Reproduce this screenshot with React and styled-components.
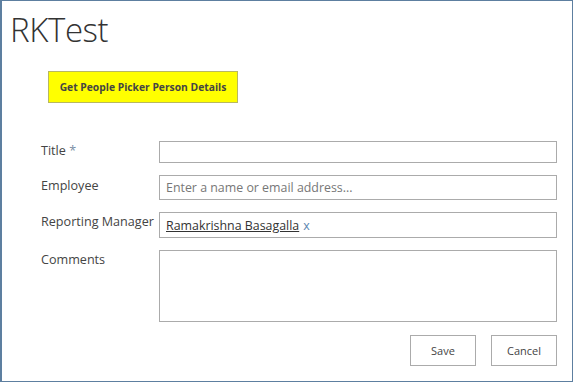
import React from "react";
import styled, { createGlobalStyle } from "styled-components";

const GlobalStyle = createGlobalStyle`
  html, body {
    margin: 0;
    padding: 0;
    background: #fff;
  }
  body {
    font-family: "Open Sans", "Liberation Sans", sans-serif;
    color: #444;
  }
`;

const Frame = styled.div`
  box-sizing: border-box;
  width: 573px;
  height: 382px;
  border: 1px solid #5d7fa0;
  border-left-width: 2px;
  padding: 9px 16px 0 8px;
  overflow: hidden;
`;

const PageTitle = styled.h1`
  margin: 0;
  font-weight: 300;
  font-size: 33px;
  line-height: 39px;
  color: #333;
  letter-spacing: -0.4px;
`;

const ActionBar = styled.div`
  padding: 22px 0 0 38px;
`;

const YellowButton = styled.button`
  box-sizing: border-box;
  width: 190px;
  height: 32px;
  background: #ffff00;
  border: 1px solid #b8b860;
  font-family: "Open Sans", "Liberation Sans", sans-serif;
  font-weight: 700;
  font-size: 10.3px;
  color: #444;
  padding: 0;
  cursor: pointer;
`;

const Form = styled.div`
  display: grid;
  grid-template-columns: 118px 398px;
  row-gap: 12px;
  padding: 38px 0 0 31px;
`;

const Label = styled.div`
  font-size: 12.6px;
  line-height: 18px;
  padding-top: ${({ $top }) => $top || 2}px;
  color: #444;
  white-space: nowrap;
`;

const Required = styled.span`
  color: #7a8ea4;
`;

const Field = styled.div`
  box-sizing: border-box;
  height: ${({ $h }) => $h}px;
  border: 1px solid #ababab;
  background: #fff;
  display: flex;
  align-items: ${({ $top }) => ($top ? "flex-start" : "center")};
  padding: 0 6px;
  font-size: 12.4px;
`;

const Placeholder = styled.span`
  color: #777;
`;

const Person = styled.span`
  color: #333;
  text-decoration: underline;
`;

const Remove = styled.span`
  color: #5b86b0;
  margin-left: 4px;
`;

const Actions = styled.div`
  display: flex;
  justify-content: flex-end;
  gap: 15px;
  padding: 13px 0 0 0;
  width: 547px;
`;

const PlainButton = styled.button`
  box-sizing: border-box;
  width: 66px;
  height: 31px;
  border: 1px solid #ababab;
  background: #fff;
  font-family: "Open Sans", "Liberation Sans", sans-serif;
  font-size: 11px;
  color: #444;
  padding: 0;
`;

export default function App() {
  return (
    <>
      <GlobalStyle />
      <Frame>
        <PageTitle>RKTest</PageTitle>
        <ActionBar>
          <YellowButton>Get People Picker Person Details</YellowButton>
        </ActionBar>
        <Form>
          <Label $top={1}>
            Title <Required>*</Required>
          </Label>
          <Field $h={22} />
          <Label $top={0}>Employee</Label>
          <Field $h={25}>
            <Placeholder>Enter a name or email address...</Placeholder>
          </Field>
          <Label $top={1}>Reporting Manager</Label>
          <Field $h={26}>
            <Person>Ramakrishna Basagalla</Person>
            <Remove>x</Remove>
          </Field>
          <Label $top={1}>Comments</Label>
          <Field $h={72} $top />
        </Form>
        <Actions>
          <PlainButton>Save</PlainButton>
          <PlainButton>Cancel</PlainButton>
        </Actions>
      </Frame>
    </>
  );
}
